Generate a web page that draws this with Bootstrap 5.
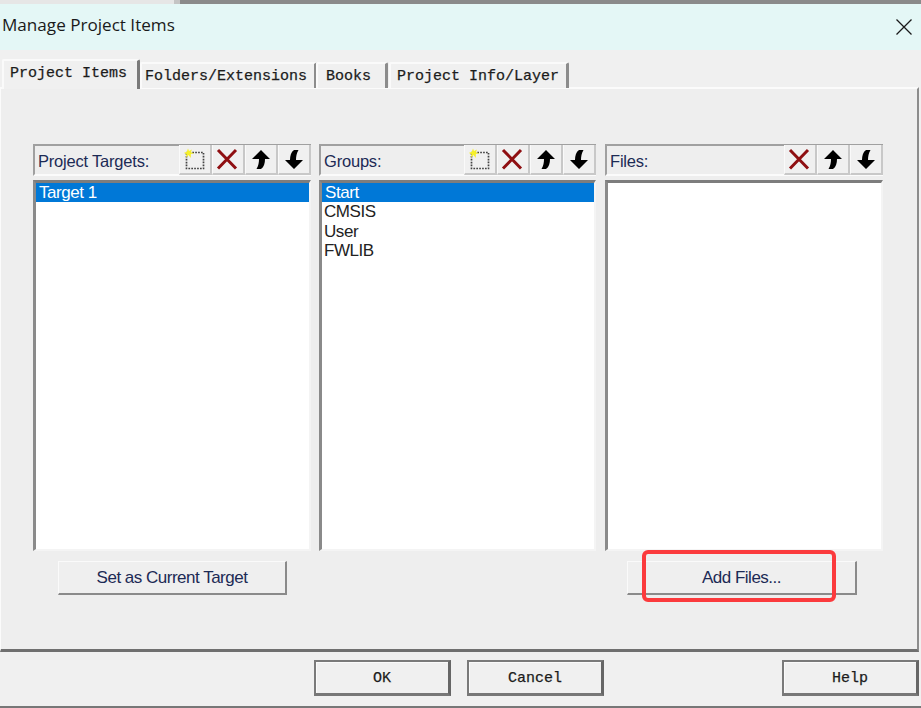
<!DOCTYPE html>
<html lang="en">
<head>
<meta charset="utf-8">
<title>Manage Project Items</title>
<link href="https://cdn.jsdelivr.net/npm/bootstrap@5.3.0/dist/css/bootstrap.min.css" rel="stylesheet">
<style>
html,body{height:708px;overflow:hidden}
body{background:#f0f0f0;color:#111;font-family:"Liberation Sans",sans-serif}
.dlg{height:708px;position:relative}
.topstrip{height:4px;background:linear-gradient(90deg,#e6e6e6 0,#e6e6e6 174px,#c4c4c4 174px,#c4c4c4 180px,#8a8a8a 180px);flex:none}
.titlebar{height:46px;background:#e4f7f6;flex:none;padding:0 0 3px 2px;font:17.1px/1.2 "Open Sans",sans-serif;color:#1a1a1a}
.closex{width:18px;height:18px;margin:2px 8px 0 0}
.tabstrip{height:37px;flex:none;padding-left:2px;position:relative;z-index:1}
.wintab{height:26px;margin-top:12px;padding:0 0 0 3px;background:#f0f0f0;border-top:2px solid #fafafa;border-left:2px solid #fafafa;border-right:3px solid #8c8c8c;border-radius:2px 2px 0 0;font:400 15px/25px "Liberation Mono",monospace;color:#1c1c1c;white-space:nowrap;-webkit-text-stroke:.25px #1c1c1c}
.wintab.on{height:30px;margin-top:9px;line-height:25px;width:138px;border-right-color:#7a7a7a;padding-left:6px}
.t2{width:177px}.t3{width:72px;margin-left:-1px;padding-left:8px}.t4{width:180px;margin-left:1px;padding-left:6px}
.tabpanel{height:565px;flex:none;margin-right:2px;border-top:2px solid #fbfbfb;border-left:1px solid #fbfbfb;border-right:2px solid #8c8c8c;border-bottom:3px solid #6f6f6f;padding:55px 0 0 32px;background:#eee}
.panes{gap:8px}
.pane{width:278px;flex:none}
.pane.mid{width:277px;margin-right:1px}
.panehead{height:32px;border-top:2px solid #a0a0a0;border-left:2px solid #a0a0a0;border-bottom:2px solid #fbfbfb;padding-left:3px;font-size:16.5px;color:#1c2a55;letter-spacing:-.2px}
.panehead>span:first-child{padding-top:3px}
.tool{width:33px;height:30px;background:#f0f0f0;border-right:2px solid #c8c8c8;border-bottom:2px solid #c8c8c8;border-left:1px solid #fafafa;display:flex;align-items:center;justify-content:center;flex:none}
.tool svg{width:24px;height:24px}
.itemlist{height:371px;margin-top:4px;background:#fff;border-top:3px solid #7d7d7d;border-left:3px solid #8a8a8a;border-right:2px solid #f4f4f4;border-bottom:2px solid #f4f4f4;font-size:17px;line-height:19.5px;color:#222;letter-spacing:-.45px;padding:0}
.itemlist div{padding-left:2px}
.itemlist .sel{background:#0078d7;color:#fff;height:19px;padding-left:3px;margin-right:0}
.actrow{margin-top:10px}
.actbtn{display:block;height:34px;padding:0;border-radius:0;background:#efefef;color:#1c2a55;font:17px/30px "Liberation Sans",sans-serif;letter-spacing:-.5px;border-style:solid;border-width:1px 2px 2px 1px;border-color:#fafafa #8a8a8a #8a8a8a #fafafa}
.actbtn:hover{background:#efefef;color:#1c2a55;border-color:#fafafa #8a8a8a #8a8a8a #fafafa}
.a1{width:229px;margin-left:25px}
.a2{width:230px;margin-left:22px}
.footrow{padding:8px 2px 0 314px;flex:none}
.dlgbtn{width:137px;height:36px;padding:2px 0 0;border-radius:0;background:#f0f0f0;font:400 15px/30px "Liberation Mono",monospace;color:#1c1c1c;-webkit-text-stroke:.25px #1c1c1c;border-style:solid;border-width:2px 3px 3px 2px;border-color:#7a7a7a #666 #777 #7a7a7a;box-shadow:inset 1px 1px 0 #fafafa}
.dlgbtn:hover{background:#f0f0f0;color:#1c1c1c;border-color:#7a7a7a #666 #777 #7a7a7a}
.bottomstrip{position:absolute;left:0;right:0;bottom:0;height:2px;background:#777}
.callout{position:absolute;left:642px;top:550px;width:194px;height:52px;border:4px solid #fb3a3d;border-radius:6px;pointer-events:none}
</style>
</head>
<body class="m-0">
<svg width="0" height="0" class="position-absolute">
<defs>
<symbol id="i-new" viewBox="0 0 24 24">
<rect x="3.500" y="5.500" width="17" height="16" fill="none" stroke="#444" stroke-width="1.700" stroke-dasharray="1.700 1.200"/>
<path d="M5 1.500l1 2.500 3-1.600L7.800 5.300l3.400 1-3.400.6L7.800 11 5.500 8 3 10.500l.5-3.500L.8 6l3-1.300z" fill="#f6f02a"/>
</symbol>
<symbol id="i-del" viewBox="0 0 24 24">
<path d="M2 3L20 21.500M20 3L2 21.500" fill="none" stroke="#8f0f12" stroke-width="3"/>
</symbol>
<symbol id="i-up" viewBox="0 0 24 24">
<path d="M12 3L21 12H16C16 16 15 20 12 22H7.500C9.500 19 10 15 10 12H3z" fill="#000"/>
</symbol>
<symbol id="i-down" viewBox="0 0 24 24">
<path d="M12 22L3 13H8C8 9 9 5 12 3H16.500C14.500 6 14 10 14 13H21z" fill="#000"/>
</symbol>
</defs>
</svg>
<div class="dlg d-flex flex-column">
  <div class="topstrip"></div>
  <div class="titlebar d-flex justify-content-between align-items-center">
    <span>Manage Project Items</span>
    <svg class="closex" viewBox="0 0 18 18"><path d="M1.500 1.500L16.500 16.500M16.500 1.500L1.500 16.500" stroke="#1a1a1a" stroke-width="1.300" fill="none"/></svg>
  </div>
  <div class="tabstrip d-flex align-items-start">
    <div class="wintab on">Project Items</div>
    <div class="wintab t2">Folders/Extensions</div>
    <div class="wintab t3">Books</div>
    <div class="wintab t4">Project Info/Layer</div>
  </div>
  <div class="tabpanel">
    <div class="panes d-flex">
      <div class="pane">
        <div class="panehead d-flex align-items-center">
          <span class="flex-grow-1">Project Targets:</span>
          <span class="tool"><svg><use href="#i-new"/></svg></span><span class="tool"><svg><use href="#i-del"/></svg></span><span class="tool"><svg><use href="#i-up"/></svg></span><span class="tool"><svg><use href="#i-down"/></svg></span>
        </div>
        <div class="itemlist"><div class="sel">Target 1</div></div>
        <div class="actrow"><button type="button" class="btn actbtn a1">Set as Current Target</button></div>
      </div>
      <div class="pane mid">
        <div class="panehead d-flex align-items-center">
          <span class="flex-grow-1">Groups:</span>
          <span class="tool"><svg><use href="#i-new"/></svg></span><span class="tool"><svg><use href="#i-del"/></svg></span><span class="tool"><svg><use href="#i-up"/></svg></span><span class="tool"><svg><use href="#i-down"/></svg></span>
        </div>
        <div class="itemlist"><div class="sel">Start</div><div>CMSIS</div><div>User</div><div>FWLIB</div></div>
      </div>
      <div class="pane">
        <div class="panehead d-flex align-items-center">
          <span class="flex-grow-1">Files:</span>
          <span class="tool"><svg><use href="#i-del"/></svg></span><span class="tool"><svg><use href="#i-up"/></svg></span><span class="tool"><svg><use href="#i-down"/></svg></span>
        </div>
        <div class="itemlist"></div>
        <div class="actrow"><button type="button" class="btn actbtn a2">Add Files...</button></div>
      </div>
    </div>
  </div>
  <div class="footrow d-flex gap-3">
    <button type="button" class="btn dlgbtn">OK</button>
    <button type="button" class="btn dlgbtn">Cancel</button>
    <button type="button" class="btn dlgbtn ms-auto">Help</button>
  </div>
  <div class="bottomstrip"></div>
  <div class="callout"></div>
</div>
</body>
</html>
